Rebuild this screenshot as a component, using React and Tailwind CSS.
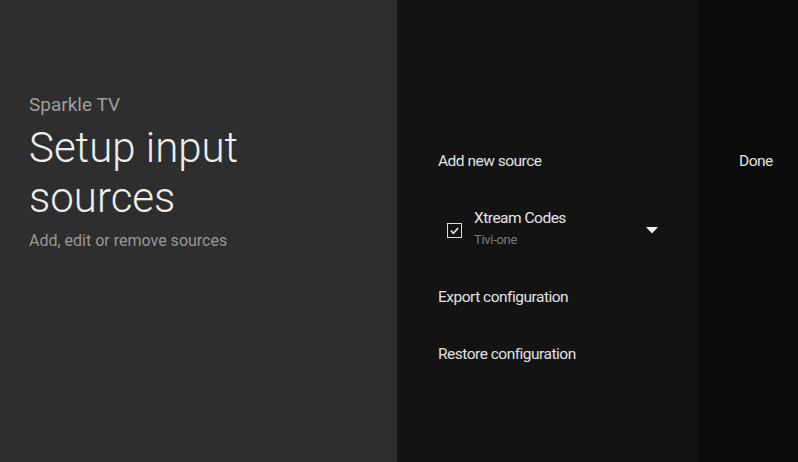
import React from "react";

const MenuItem = ({ label, className = "" }) => (
  <div className={`text-[15.5px] leading-[20px] tracking-[-0.5px] text-[#e2e2e2] ${className}`}>{label}</div>
);

const SourceRow = ({ name, subtitle }) => (
  <div className="flex items-center mt-[37px] pl-[9px] pr-[40px]">
    <div className="w-[15px] h-[15px] border-[1.5px] border-[#dedede] flex items-center justify-center mt-[4px]">
      <svg width="11" height="11" viewBox="0 0 12 12" fill="none">
        <path d="M2 6.2 L4.8 9 L10 3.2" stroke="#e6e6e6" strokeWidth="1.8" />
      </svg>
    </div>
    <div className="ml-[12px] flex flex-col flex-1">
      <div className="text-[15.5px] leading-[20px] tracking-[-0.5px] text-[#e6e6e6]">{name}</div>
      <div className="text-[13px] leading-[16px] tracking-[-0.3px] text-[#7c7c7c] mt-[4px]">{subtitle}</div>
    </div>
    <svg width="12" height="7" viewBox="0 0 12 7" className="mt-[4px]">
      <path d="M0 0 H12 L6 6.5 Z" fill="#f2f2f2" />
    </svg>
  </div>
);

export default function App() {
  return (
    <div className="flex w-[798px] h-[462px] overflow-hidden font-['Roboto',sans-serif]">
      <div className="w-[397px] bg-[#2e2e2e] pl-[29px] pt-[93px] flex flex-col">
        <div className="text-[19px] leading-[24px] text-[#9e9e9e]">Sparkle TV</div>
        <div className="mt-[6px] text-[42px] leading-[50px] text-[#eeeeee] font-light">
          Setup input
          <br />
          sources
        </div>
        <div className="mt-[8px] text-[16px] leading-[20px] text-[#989898]">
          Add, edit or remove sources
        </div>
      </div>
      <div className="w-[301px] bg-[#131313] pl-[41px] pt-[151px] flex flex-col">
        <MenuItem label="Add new source" />
        <SourceRow name="Xtream Codes" subtitle="Tivi-one" />
        <MenuItem label="Export configuration" className="mt-[39px]" />
        <MenuItem label="Restore configuration" className="mt-[37px]" />
      </div>
      <div className="flex-1 bg-[#0b0b0b] pl-[41px] pt-[151px]">
        <MenuItem label="Done" />
      </div>
    </div>
  );
}
